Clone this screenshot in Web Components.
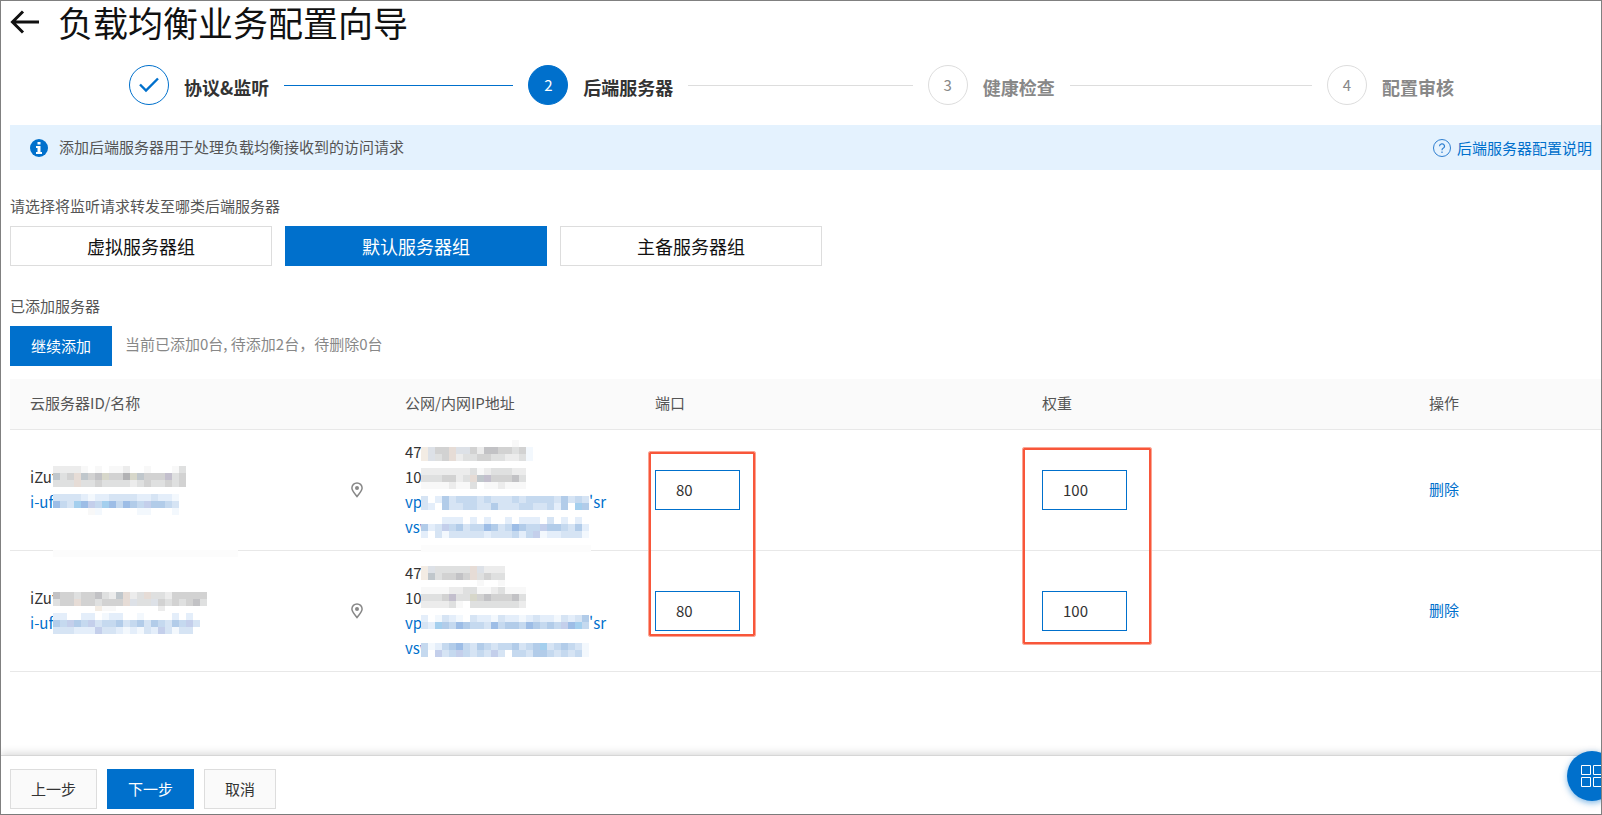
<!DOCTYPE html>
<html lang="zh-CN">
<head>
<meta charset="utf-8">
<meta name="viewport" content="width=device-width, initial-scale=1">
<title>负载均衡业务配置向导</title>
<style>
  html, body { margin: 0; }
  body {
    --brand: #0070cc;
    --line: #dddddd;
    --text: #555555;
    font: 15px/20px "Noto Sans CJK SC", sans-serif;
    color: var(--text);
    background: #fff;
  }
</style>
</head>
<body>
<wizard-page>
  <page-title slot="header">负载均衡业务配置向导</page-title>
  <step-bar slot="header">
    <step-item state="done">协议&amp;监听</step-item>
    <step-item state="current" number="2">后端服务器</step-item>
    <step-item number="3">健康检查</step-item>
    <step-item number="4" last>配置审核</step-item>
  </step-bar>
  <notice-bar>
    添加后端服务器用于处理负载均衡接收到的访问请求
    <help-link slot="extra">后端服务器配置说明</help-link>
  </notice-bar>
  <form-section heading="请选择将监听请求转发至哪类后端服务器">
    <ui-button kind="choice">虚拟服务器组</ui-button>
    <ui-button kind="choice" primary>默认服务器组</ui-button>
    <ui-button kind="choice">主备服务器组</ui-button>
  </form-section>
  <form-section heading="已添加服务器" class="added">
    <ui-button primary>继续添加</ui-button>
    <span class="hint">当前已添加0台, 待添加2台，待删除0台</span>
  </form-section>
  <server-table></server-table>
  <ui-button slot="footer">上一步</ui-button>
  <ui-button slot="footer" primary>下一步</ui-button>
  <ui-button slot="footer">取消</ui-button>
</wizard-page>

<script>
const define = (name, html, setup) => {
  const template = document.createElement('template');
  template.innerHTML = html;
  customElements.define(name, class extends HTMLElement {
    constructor() {
      super();
      this.attachShadow({ mode: 'open' }).append(template.content.cloneNode(true));
    }
    connectedCallback() { if (setup) setup(this, this.shadowRoot); }
  });
};

define('wizard-page', `
  <style>
    :host { display: flex; flex-direction: column; position: relative; box-sizing: border-box;
            min-height: 100vh; border: 1px solid #808080; overflow-x: clip; }
    header { padding-left: 9px; }
    main { flex: 1; padding-left: 9px; padding-bottom: 24px; }
    ::slotted(form-section) { margin-top: 26px; }
    ::slotted(form-section.added) { margin-top: 30px; }
    ::slotted(server-table) { margin-top: 13px; }
    footer { display: flex; gap: 10px; padding: 13px 9px 5px; border-top: 1px solid #d6d6d6;
             box-shadow: 0 -2px 8px rgba(0, 0, 0, .15); background: #fff; }
  </style>
  <header><slot name="header"></slot></header>
  <main><slot></slot></main>
  <footer><slot name="footer"></slot></footer>
  <quick-menu></quick-menu>
`);

define('quick-menu', `
  <style>
    :host { position: absolute; right: -16px; bottom: 13px; }
    button { display: block; width: 50px; height: 50px; padding: 0; border: 0; border-radius: 50%;
             background: var(--brand); box-shadow: 0 2px 6px rgba(0, 112, 204, .5); }
    svg { display: block; margin: 14px; }
  </style>
  <button aria-label="快捷菜单">
    <svg width="22" height="22" fill="none" stroke="#fff">
      <path d="M.5 .5h9v9h-9zM12.500 .5h9v9h-9zM.5 12.500h9v9h-9zM12.500 12.500h9v9h-9z"/>
    </svg>
  </button>
`);

define('page-title', `
  <style>
    :host { display: flex; align-items: center; gap: 18px; font-family: "Liberation Sans", "Noto Sans CJK SC", sans-serif; }
    a { display: block; margin-bottom: 6px; }
    svg { display: block; }
    h1 { margin: 0; font-size: 35px; line-height: 48px; font-weight: 400; color: #111; }
  </style>
  <a href="#" aria-label="返回">
    <svg width="30" height="24" fill="none" stroke="#111" stroke-width="3"><path d="M29 12H3M13 1.500L2.500 12L13 22.500"/></svg>
  </a>
  <h1><slot></slot></h1>
`);

define('step-bar', `
  <style>
    :host { display: flex; gap: 15px; padding: 16px 147px 20px 119px; }
  </style>
  <slot></slot>
`);

define('step-item', `
  <style>
    :host { display: flex; align-items: center; gap: 15px; flex: 1; color: #888; }
    :host([last]) { flex: none; }
    :host([last]) i { display: none; }
    .dot { display: flex; align-items: center; justify-content: center; flex: none; box-sizing: border-box;
           width: 40px; height: 40px; border: 1px solid var(--line); border-radius: 50%; }
    .label { font-size: 18px; line-height: 24px; font-weight: 700; padding-top: 4px; white-space: nowrap; }
    i { flex: 1; height: 1px; background: var(--line); }
    svg { display: none; }
    :host([state]) { color: #333; }
    :host([state=done]) .dot { border-color: var(--brand); }
    :host([state=done]) i { background: var(--brand); }
    :host([state=done]) svg { display: block; }
    :host([state=current]) .dot { background: var(--brand); border-color: var(--brand); color: #fff; }
  </style>
  <span class="dot">
    <svg width="20" height="16" fill="none" stroke="#0070cc" stroke-width="2.400"><path d="M1 7.500L7 13.500L19 1.500"/></svg>
    <span class="number"></span>
  </span>
  <span class="label"><slot></slot></span>
  <i></i>
`, (el, root) => { root.querySelector('.number').textContent = el.getAttribute('number') || ''; });

define('notice-bar', `
  <style>
    :host { display: flex; align-items: center; gap: 11px; height: 45px; padding: 0 9px 0 20px; background: #e4f2fe; }
    p { flex: 1; margin: 0; padding-bottom: 2px; }
  </style>
  <svg width="18" height="18"><circle cx="9" cy="9" r="9" fill="#0070cc"/><path fill="#fff" d="M7.500 3h3v2.500h-3zM6 7h4.500v6H12v2H6v-2h1.500V9H6z"/></svg>
  <p><slot></slot></p>
  <slot name="extra"></slot>
`);

define('help-link', `
  <style>
    :host { display: block; }
    a { display: flex; align-items: center; gap: 6px; color: var(--brand); text-decoration: none; }
  </style>
  <a href="#">
    <svg width="18" height="18" fill="none" stroke="#2f7fd0"><circle cx="9" cy="9" r="8.500"/><path d="M6.500 7.200a2.500 2.300 0 1 1 3.600 2.100Q9 9.900 9 11.200M9 12.500v1.500" stroke-width="1.200"/></svg>
    <slot></slot>
  </a>
`);

define('form-section', `
  <style>
    :host { display: block; }
    h2 { margin: 0 0 10px; font: inherit; }
    .row { display: flex; align-items: center; gap: 13px; }
    ::slotted(.hint) { color: #888; padding-bottom: 4px; }
  </style>
  <h2></h2>
  <div class="row"><slot></slot></div>
`, (el, root) => { root.querySelector('h2').textContent = el.getAttribute('heading'); });

define('ui-button', `
  <style>
    :host { display: block; }
    button { display: block; box-sizing: border-box; height: 40px; padding: 0 20px; font: inherit;
             color: #333; background: #fafafa; border: 1px solid var(--line); border-radius: 0; }
    :host([kind=choice]) button { width: 262px; font-size: 18px; color: #111; background: #fff; }
    :host([primary]) button { color: #fff !important; background: var(--brand) !important; border-color: var(--brand); }
  </style>
  <button type="button"><slot></slot></button>
`);

/* Mosaic over private identifiers: rows of 7px cells, one palette letter per cell. */
const PALETTE = {
  a: '#c2c2c5', b: '#d2d2d2', c: '#dfe0e0', d: '#ececec', e: '#f8f8f8', g: '#c0c7cc', k: '#b2b2b4',
  p: '#e6dcd6', q: '#f3ece4', v: '#c3bfcd', y: '#d7d7ca', w: '#dde1e7',
  1: '#9dbde6', 2: '#b2cce9', 3: '#c5d9ef', 4: '#d6e4f4', 5: '#e4eefa', 6: '#f3f8fd', 7: '#a4cfee', 8: '#c4cfeb'
};
define('mosaic-strip', `
  <style>
    :host { display: block; flex: none; position: relative; }
    svg { display: block; background: #fff; }
  </style>
  <svg height="25" shape-rendering="crispEdges" aria-hidden="true"></svg>
`, (el, root) => {
  const rows = el.getAttribute('cells').split('|');
  const top = Number(el.getAttribute('top'));
  const svg = root.querySelector('svg');
  svg.setAttribute('width', Math.max(...rows.map(r => r.length)) * 7);
  svg.innerHTML = rows.map((row, y) => [...row].map((c, x) => c === '.' ? '' :
    `<rect x="${x * 7}" y="${top + y * 7}" width="7" height="7" fill="${PALETTE[c]}"/>`).join('')).join('');
});

define('masked-text', `
  <style>
    :host { display: flex; height: 25px; line-height: 24px; white-space: nowrap; color: #333; }
    a { display: flex; color: var(--brand); text-decoration: none; }
    span { display: flex; }
    .start { width: var(--visible); }
  </style>
`, (el, root) => {
  const box = document.createElement(el.hasAttribute('link') ? 'a' : 'span');
  if (box.localName === 'a') box.href = '#';
  box.innerHTML = `<span class="start">${el.getAttribute('start')}</span>
    <mosaic-strip top="${el.getAttribute('top')}" cells="${el.getAttribute('cells')}"></mosaic-strip>${
    el.hasAttribute('end') ? `<span>${el.getAttribute('end')}</span>` : ''}`;
  root.append(box);
});

define('number-field', `
  <style>
    :host { display: block; }
    input { display: block; box-sizing: border-box; width: 85px; height: 40px; padding: 0 20px 2px;
            font: inherit; color: #333; background: #fff; border: 1px solid var(--brand); border-radius: 0; outline: 0; }
  </style>
  <input type="text" inputmode="numeric">
`, (el, root) => {
  const input = root.querySelector('input');
  input.value = el.getAttribute('value');
  input.setAttribute('aria-label', el.getAttribute('label'));
});

const SERVERS = [
  {
    name: [['iZuf', 1, 'dddde.e.eed..e...ec|gcbpgbaybbkygbbbvcb|cccpccbccccdcbccbcb'],
           ['i-uf', 4, '444456554444554556|134718371312382234|.....e6.....66...6', 1]],
    ip: [['47', 0, '.............e..|qwbbpwwbdaabbcb6|qwcbpdccbbccddc6'],
         ['10', 3, 'dddddddcedcccdd|cccbbdcpgvbbbac|eeeedeec.eedeee'],
         ['vp', 6, '4.5243334344434333342434|45.244334424443344352.72', 1, "'sr"],
         ['vsw', 2, '...555.5.5..5.555.4.5.5.|254832433124312338223425|5.4644444544435386554446', 1]]
  },
  {
    name: [['iZuf', 6, 'abbcbbacdgpdcpccdbbbbb|cbbpbbcbbbpwccwbcbcbac|......qee......d......'],
           ['i-uf', 2, '55..55.655..6....5.5.|238238433243242342384|44455584456564584644.', 1]],
    ip: [['47', 5, 'qwcccccpwddd|qgcbbabpcbcc|........e..e'],
         ['10', 1, 'eeeeddcceedceee|cccbvccybabbbac|ddddce.cccccccd'],
         ['vp', 4, '5.6456.45564556545564542|457231233413223123238173', 1, "'sr"],
         ['vsw', 7, '365321342343324327432346|3.8438343484.33422343436', 1]]
  }
];
const line = ([start, top, cells, link, end]) =>
  `<masked-text start="${start}" top="${top}" cells="${cells}" ${link ? 'link' : ''} ${end ? `end="${end}"` : ''}></masked-text>`;

define('server-table', `
  <style>
    :host { display: block; }
    table { width: 100%; table-layout: fixed; border-collapse: separate; border-spacing: 0; }
    .c-name { width: 375px; } .c-ip { width: 250px; } .c-action { width: 192px; }
    th, td { position: relative; box-sizing: border-box; padding: 0 20px; text-align: left; font-weight: inherit;
             vertical-align: middle; border-bottom: 1px solid #e8e8e8; }
    th { height: 51px; padding-bottom: 2px; background: #fafafa; }
    td { height: 121px; }
    .name { display: flex; align-items: center; justify-content: space-between; --visible: 23px; }
    .ip { --visible: 16px; }
    .pin { display: block; margin-right: 2px; }
    a { display: block; padding-bottom: 2px; color: var(--brand); text-decoration: none; }
    .frame { position: absolute; z-index: 1; box-sizing: border-box; border: 2px solid #f8563a;
             outline: 1px solid #fba594; border-radius: 1px; pointer-events: none; }
    .port { left: 14px; top: 22px; width: 106px; height: 184px; }
    .weight { left: 1px; top: 18px; width: 128px; height: 196px; }
    .cover { position: absolute; z-index: 1; height: 7px; background: #fcfcfc; }
    .name-cover { left: 43px; top: 120px; width: 185px; }
    .ip-cover { left: 36px; top: 115px; width: 170px; }
  </style>
  <table>
    <colgroup><col class="c-name"><col class="c-ip"><col><col><col class="c-action"></colgroup>
    <thead><tr><th>云服务器ID/名称</th><th>公网/内网IP地址</th><th>端口</th><th>权重</th><th>操作</th></tr></thead>
    <tbody></tbody>
  </table>
`, (el, root) => {
  root.querySelector('tbody').innerHTML = SERVERS.map((s, i) => `
    <tr>
      <td><div class="name"><div>${s.name.map(line).join('')}</div>
        <svg class="pin" width="12" height="16" fill="none" stroke="#888" stroke-width="1.500">
          <path d="M6 14.500C4 11.500 .9 9 .9 6A5.100 5.100 0 0 1 11.100 6C11.100 9 8 11.500 6 14.500z"/><circle cx="6" cy="6" r="2" fill="#888" stroke="none"/></svg>
        </div>${i ? '' : '<span class="cover name-cover"></span>'}</td>
      <td class="ip">${s.ip.map(line).join('')}${i ? '' : '<span class="cover ip-cover"></span>'}</td>
      <td><number-field label="端口" value="80"></number-field>${i ? '' : '<span class="frame port"></span>'}</td>
      <td><number-field label="权重" value="100"></number-field>${i ? '' : '<span class="frame weight"></span>'}</td>
      <td><a href="#">删除</a></td>
    </tr>`).join('');
});
</script>
</body>
</html>
